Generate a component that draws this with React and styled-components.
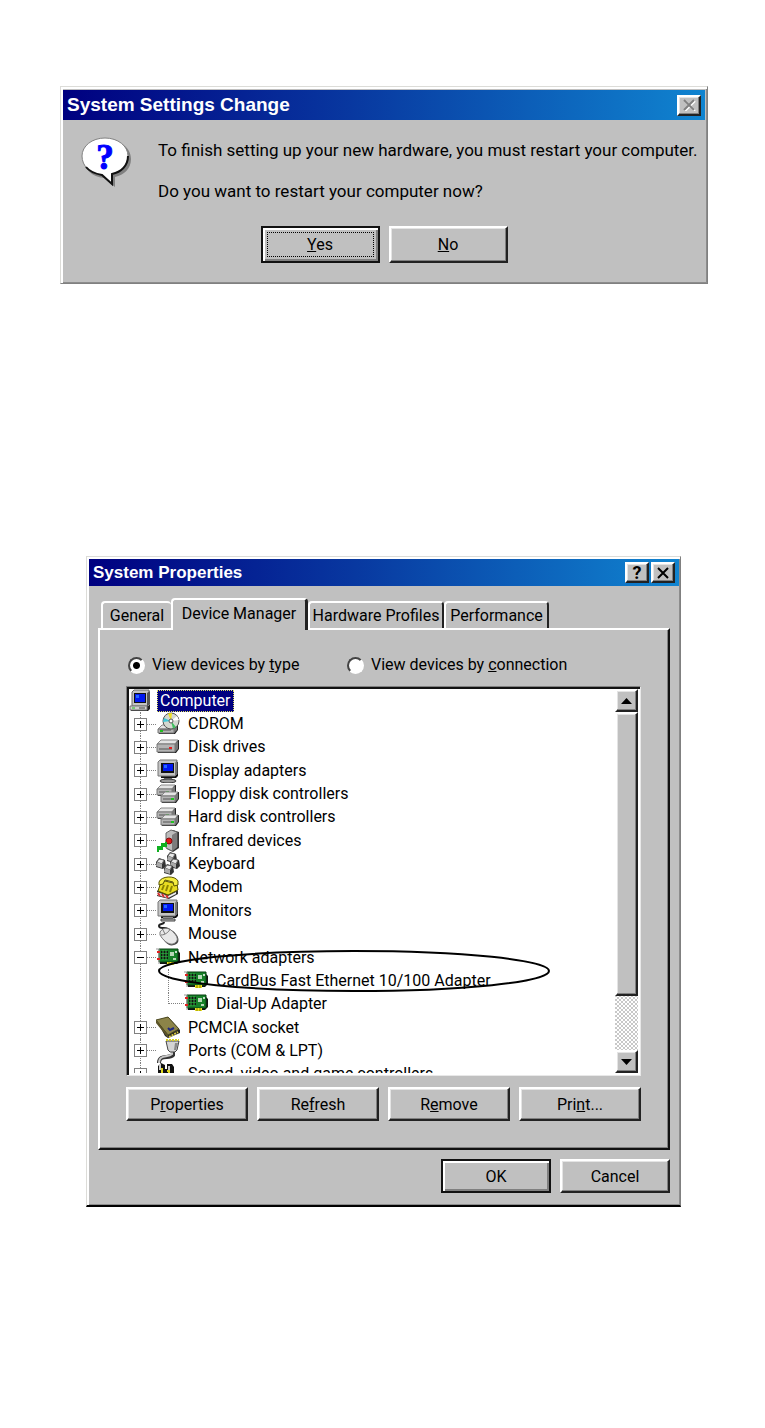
import React from "react";
import styled, { createGlobalStyle, css } from "styled-components";

const GlobalStyle = createGlobalStyle`
  * {
    box-sizing: border-box;
  }

  body {
    margin: 0;
    background: #fff;
    color: #000;
    font-family: Roboto, "Liberation Sans", Arial, sans-serif;
    font-size: 16px;
    line-height: 20px;
  }
`;

const Page = styled.main`
  display: flex;
  flex-direction: column;
  gap: 272px;
  padding: 86px 57px 220px 60px;
`;

const Window = styled.section`
  background: #c0c0c0;
  border: 1px solid;
  border-color: #dcdcd8 #808080 #808080 #dcdcd8;
  box-shadow: inset 2px 2px #fff, inset -1px -1px #8c8c8c;
  padding: 3px 2px 2px 2px;
`;

const PropertiesWindow = styled(Window)`
  margin: 0 27px 0 26px;
  padding: 2px 1px 0 2px;
  border-bottom: 2px solid #000;
`;

const TitleBar = styled.header`
  display: flex;
  align-items: center;
  gap: 2px;
  height: ${(props) => props.$height}px;
  padding: 0 4px;
  background: linear-gradient(to right, #000080, #0838a0 45%, #1084d0);
  color: #fff;
`;

const Title = styled.h2`
  flex: 1;
  margin: 0;
  font-family: "Liberation Sans", Arial, sans-serif;
  font-size: ${(props) => props.$size}px;
  font-weight: bold;
`;

const raised = css`
  background: #c0c0c0;
  border: 2px solid;
  border-color: #fff #222 #222 #fff;
  box-shadow: inset -1px -1px #808080, inset 1px 1px #e4e4e4;
  color: #000;
  font-family: inherit;
`;

const TitleButton = styled.button`
  ${raised}
  display: flex;
  align-items: center;
  justify-content: center;
  width: 24px;
  height: 21px;
  padding: 0;
  font-size: 18px;
  line-height: 16px;
  font-weight: bold;
`;

const Button = styled.button`
  ${raised}
  width: ${(props) => props.$width || "auto"};
  height: ${(props) => props.$height || 34}px;
  padding: 0;
  font-size: 16px;

  ${(props) =>
    props.$primary &&
    css`
      border-color: #111;
      box-shadow: inset 2px 2px #fff, inset -2px -2px #808080;
    `}
`;

const FocusRect = styled.span`
  display: block;
  margin: 4px;
  padding: 2px 0;
  border: 1px dotted #000;
`;

const MessageBody = styled.div`
  display: grid;
  grid-template-columns: 52px 1fr;
  column-gap: 26px;
  padding: 16px 0 0 17px;
`;

const Message = styled.div`
  padding-top: 4px;
  font-size: 17px;

  p {
    margin: 0 0 21px;
    white-space: nowrap;
  }
`;

const MessageButtons = styled.div`
  display: flex;
  justify-content: center;
  gap: 9px;
  padding: 4px 0 18px;
`;

const PropertiesBody = styled.div`
  padding: 12px 9px 12px 9px;
`;

const Tabs = styled.div`
  display: flex;
  align-items: flex-end;
  padding-left: 3px;
`;

const Tab = styled.button`
  height: 27px;
  width: ${(props) => props.$width}px;
  padding: 0;
  background: #c0c0c0;
  border: 2px solid;
  border-color: #fff #222 transparent #fff;
  border-bottom: 0;
  border-radius: 4px 4px 0 0;
  color: #000;
  font-family: inherit;
  font-size: 16px;
  white-space: nowrap;

  ${(props) =>
    props.$active &&
    css`
      height: 32px;
      margin-bottom: -2px;
      padding-bottom: 4px;
      border-right-width: 3px;
      z-index: 1;
    `}

  ${(props) =>
    props.$beforeActive &&
    css`
      border-right: 0;
    `}
`;

const Panel = styled.div`
  padding: 25px 27px 27px 26px;
  border: 2px solid;
  border-color: #fff #111 #111 #fff;
  box-shadow: inset -1px -1px #808080;
`;

const ViewOptions = styled.div`
  display: grid;
  grid-template-columns: 219px 1fr;
  padding: 0 0 11px 2px;
`;

const Option = styled.label`
  display: flex;
  align-items: center;
  gap: 7px;
`;

const Radio = styled.input`
  appearance: none;
  width: 17px;
  height: 17px;
  margin: 0;
  border: 2px solid;
  border-color: #444 #fff #fff #444;
  border-radius: 50%;
  background: #fff;

  &:checked {
    background: radial-gradient(circle, #000 3px, #fff 4px);
  }
`;

const ListBox = styled.div`
  position: relative;
  display: flex;
  height: 390px;
  padding: 2px;
  background: #fff;
  border: 1px solid;
  border-color: #808080 #e8e8e8 #e8e8e8 #808080;
  box-shadow: inset 2px 2px #111;
`;

const TreeViewport = styled.div`
  flex: 1;
  overflow: hidden;
`;

const Tree = styled.ul`
  display: grid;
  grid-template-rows: repeat(17, minmax(0, 1fr));
  height: 397px;
  margin: 0;
  padding: 0;
  list-style: none;
`;

const indents = [0, 5, 55];

const TreeRow = styled.li`
  position: relative;
  display: flex;
  align-items: center;
  padding-left: ${(props) => indents[props.$level]}px;
  white-space: nowrap;

  /* trunk line behind the expanders */
  &::before {
    content: "";
    position: absolute;
    top: 0;
    bottom: 0;
    left: 11px;
    border-left: 1px dotted #808080;
    display: ${(props) => (props.$level ? "block" : "none")};
  }
`;

const Expander = styled.button`
  position: relative;
  display: flex;
  width: 13px;
  height: 13px;
  padding: 0;
  background: #fff;
  border: 1px solid #808080;
`;

const Stub = styled.span`
  width: 9px;
  border-top: 1px dotted #808080;
`;

const Branch = styled.span`
  position: absolute;
  left: 39px;
  top: 0;
  width: 16px;
  height: ${(props) => (props.$last ? "50%" : "100%")};
  border-left: 1px dotted #808080;
  border-bottom: ${(props) => (props.$last ? "1px dotted #808080" : "0")};
`;

const TreeLabel = styled.span`
  margin-left: ${(props) => (props.$selected ? 4 : 5)}px;
  padding: 0 2px;
  border: 1px dotted transparent;

  ${(props) =>
    props.$selected &&
    css`
      background: #000080;
      border-color: #e0e060;
      color: #fff;
    `}
`;

const ScrollBar = styled.div`
  display: flex;
  flex-direction: column;
  width: 23px;
  background: repeating-conic-gradient(#c8c8c8 0 25%, #fff 0 50%) 0 0 / 4px 4px;
`;

const ScrollButton = styled.button`
  ${raised}
  display: flex;
  align-items: center;
  justify-content: center;
  height: 23px;
  padding: 0;
`;

const ScrollTrack = styled.div`
  flex: 1;
`;

const ScrollThumb = styled.div`
  ${raised}
  height: 84%;
`;

const Highlight = styled.svg`
  position: absolute;
  left: 31px;
  top: 262px;
`;

const ActionRow = styled.div`
  display: grid;
  grid-template-columns: repeat(4, 1fr);
  gap: 9px;
  padding-top: 11px;
`;

const DialogButtons = styled.div`
  display: flex;
  justify-content: flex-end;
  gap: 9px;
  padding-top: 9px;
`;

const Svg = ({ children }) => (
  <svg width="24" height="24" viewBox="0 0 24 24" aria-hidden="true">
    {children}
  </svg>
);

const Drive = ({ x, y, w, h }) => (
  <g transform={`translate(${x} ${y})`}>
    <path d={`M1 4L5 0H${w}V${h - 4}L${w - 3} ${h}H1Z`} fill="#222" />
    <path d={`M0 4L4 0H${w - 1}L${w - 4} 4Z`} fill="#e4e4e4" stroke="#888" strokeWidth="1" />
    <path d={`M0 4H${w - 4}V${h - 1}H0Z`} fill="#b4b4b4" stroke="#777" />
    <path d={`M${w - 4} 4L${w - 1} 1V${h - 4}L${w - 4} ${h - 1}Z`} fill="#777" />
    <path d={`M2 ${h - 4}H${w - 7}`} stroke="#555" />
  </g>
);

const Screen = () => (
  <>
    <path d="M4 3H22V17L20 19H5Z" fill="#111" />
    <path d="M2 3L4 1H21V15L19 17H2Z" fill="#c4c4c4" stroke="#777" />
    <path d="M19 4L21 1V15L19 17Z" fill="#777" />
    <path d="M5 4H18V14H5Z" fill="#111" />
    <path d="M7 5H17V12H7Z" fill="#0018f0" />
    <path d="M8 6H11V9H8Z" fill="#2868ff" />
  </>
);

const Board = () => (
  <>
    <path d="M3 5H22L24 7V15L21 18H4Z" fill="#111" />
    <path d="M3 3H22V16H3Z" fill="#168028" stroke="#064010" />
    <path d="M0 3H3V18" fill="none" stroke="#999" strokeWidth="1" />
    <path d="M1 6H4M1 13H4" stroke="#e02020" strokeWidth="2" />
    <path d="M5 6H12M5 9H12M5 12H12" stroke="#111" strokeWidth="2" />
    <path d="M7 4V14M10 4V14" stroke="#38b048" />
    <path d="M14 6H18V10H14ZM17 12H20V14H17Z" fill="#b8d8b8" />
    <circle cx="20" cy="6" r="1" fill="#fff" />
    <path d="M11 16H18V19H11Z" fill="#e8e020" />
    <path d="M13 16V19M16 16V19" stroke="#888000" />
  </>
);

const icons = {
  computer: (
    <>
      <path d="M3 3L5 1H20V15L18 17H3Z" fill="#c4c4c4" stroke="#666" />
      <path d="M18 4L21 2V15L18 17Z" fill="#555" />
      <path d="M5 4H17V14H5Z" fill="#111" />
      <path d="M6 5H16V13H6Z" fill="#0018f0" />
      <path d="M7 6H10V9H7Z" fill="#2868ff" />
      <path d="M2 17H19L21 15V20L19 22H2Z" fill="#222" />
      <path d="M1 17H18V21H1Z" fill="#d0d0d0" stroke="#777" />
      <path d="M3 19H6" stroke="#20c020" />
      <path d="M10 19H16" stroke="#444" />
    </>
  ),
  cdrom: (
    <>
      <Drive x={2} y={13} w={20} h={9} />
      <path d="M4 19H7" stroke="#20c020" strokeWidth="2" />
      <circle cx="15" cy="9" r="8" fill="#d4d8d0" stroke="#555" />
      <path d="M15 9L12 1.6L16 1Z" fill="#f0e020" />
      <path d="M15 9L21 4L23 8Z" fill="#fff" />
      <path d="M15 9L8 6L7 10Z" fill="#40c8d8" />
      <path d="M15 9L17 16.8L20 15Z" fill="#40c060" />
      <circle cx="15" cy="9" r="2" fill="#fff" stroke="#555" />
    </>
  ),
  disk: (
    <>
      <Drive x={1} y={5} w={22} h={13} />
      <path d="M13 13H16" stroke="#e02020" strokeWidth="2" />
    </>
  ),
  display: (
    <>
      <Screen />
      <path d="M8 19H16V21H8Z" fill="#777" />
      <ellipse cx="12" cy="22" rx="8" ry="2" fill="#999" stroke="#333" />
    </>
  ),
  controller: (
    <>
      <Drive x={1} y={3} w={19} h={11} />
      <path d="M10 10H13" stroke="#20c020" strokeWidth="1" />
      <Drive x={5} y={10} w={18} h={11} />
      <path d="M15 17H18" stroke="#20c020" strokeWidth="2" />
    </>
  ),
  infrared: (
    <>
      <path d="M12 4L17 1L23 3V19L17 23L11 20Z" fill="#333" />
      <path d="M10 4L15 1L21 3V18L16 22L10 19Z" fill="#bcbcbc" stroke="#666" />
      <path d="M16 6L21 3V18L16 22Z" fill="#7c7c7c" />
      <circle cx="13" cy="12" r="3" fill="#e01818" stroke="#801010" />
      <path d="M2 23V18H4V20H6V15H8V17H10V13" fill="none" stroke="#10b020" strokeWidth="2" />
    </>
  ),
  keyboard: (
    <>
      {[
        [11, 0, "a"],
        [0, 6, "b"],
        [14, 6, "c"],
        [8, 12, "d"],
      ].map(([x, y, key]) => (
        <g key={key} transform={`translate(${x} ${y})`}>
          <path d="M0 4L3 0L9 2L10 8L7 11L0 9Z" fill="#333" />
          <path d="M1 4L3 1L8 2L6 6Z" fill="#e8e8e8" stroke="#666" />
          <path d="M1 4L6 6L6 10L0 8Z" fill="#aaa" />
        </g>
      ))}
    </>
  ),
  modem: (
    <>
      <path d="M1 15L7 11L22 14V18L13 23L1 20Z" fill="#333" />
      <path d="M1 16L12 20L20 16V18L12 22L1 19Z" fill="#eee" />
      <path d="M2 17L4 20M6 18L8 21M10 19L12 22" stroke="#d83030" strokeWidth="2" />
      <path d="M4 9L9 5L21 8L22 14L12 19L2 15Z" fill="#e8dc20" stroke="#555000" />
      <path d="M3 6C5 0 19 -1 22 5V9L18 10L17 6L9 4L7 8L3 9Z" fill="#f4ec40" stroke="#555000" />
      <path d="M8 9L6 14M12 9L10 15M16 10L14 16" stroke="#8c8400" strokeWidth="2" />
    </>
  ),
  monitor: (
    <>
      <Screen />
      <path d="M7 18H17V20H7Z" fill="#888" />
      <path d="M5 20H19V22H5Z" fill="#bbb" stroke="#444" />
    </>
  ),
  mouse: (
    <>
      <path d="M14 9C12 4 3 8 3 4C3 1 8 3 8 0" fill="none" stroke="#222" strokeWidth="2" />
      <path d="M5 10C9 5 16 7 20 12C24 17 23 22 18 23C12 25 8 19 5 14Z" fill="#444" />
      <path d="M4 10C8 4 14 6 18 11C23 16 22 20 17 22C12 23 7 18 4 13Z" fill="#e8e8e8" stroke="#777" />
      <path d="M5 13C9 13 13 10 14 7M9 12L7 8" fill="none" stroke="#777" />
    </>
  ),
  network: <Board />,
  pcmcia: (
    <>
      <path d="M1 5L12 1L24 14V17L12 22L9 20Z" fill="#222" />
      <path d="M0 4L12 1L23 13L12 19Z" fill="#8c8448" stroke="#4c4820" />
      <path d="M0 4L12 19V22L0 7Z" fill="#5c5428" />
      <path d="M12 12L14 14L18 12" fill="none" stroke="#202880" strokeWidth="2" />
      <path d="M13 21L22 16" stroke="#d8c840" strokeDasharray="2 1" strokeWidth="2" />
    </>
  ),
  ports: (
    <>
      <path d="M17 12V16C13 20 3 15 3 24" fill="none" stroke="#333" strokeWidth="4" />
      <path d="M16 12V15C12 19 3 15 3 24" fill="none" stroke="#c8c8c8" strokeWidth="2" />
      <path d="M10 2H23L21 11L19 13H14L12 11Z" fill="#d4d4d4" stroke="#444" />
      <path d="M19 4H22L20 11H18Z" fill="#888" />
      <path d="M10 1H23" stroke="#d8d020" strokeWidth="2" strokeDasharray="2 1" />
    </>
  ),
  sound: (
    <>
      <path d="M2 4L5 1L9 3V7H11V2H16L18 5V14H2Z" fill="#111" />
      <path d="M4 2V8M13 4V9" stroke="#ccc" strokeWidth="2" />
      <path d="M6 6V12M11 9H13V12" stroke="#e0d820" strokeWidth="2" />
    </>
  ),
};

const devices = [
  { label: "Computer", icon: "computer", level: 0 },
  { label: "CDROM", icon: "cdrom", level: 1 },
  { label: "Disk drives", icon: "disk", level: 1 },
  { label: "Display adapters", icon: "display", level: 1 },
  { label: "Floppy disk controllers", icon: "controller", level: 1 },
  { label: "Hard disk controllers", icon: "controller", level: 1 },
  { label: "Infrared devices", icon: "infrared", level: 1 },
  { label: "Keyboard", icon: "keyboard", level: 1 },
  { label: "Modem", icon: "modem", level: 1 },
  { label: "Monitors", icon: "monitor", level: 1 },
  { label: "Mouse", icon: "mouse", level: 1 },
  { label: "Network adapters", icon: "network", level: 1, open: true },
  { label: "CardBus Fast Ethernet 10/100 Adapter", icon: "network", level: 2 },
  { label: "Dial-Up Adapter", icon: "network", level: 2, last: true },
  { label: "PCMCIA socket", icon: "pcmcia", level: 1 },
  { label: "Ports (COM & LPT)", icon: "ports", level: 1 },
  { label: "Sound, video and game controllers", icon: "sound", level: 1 },
];

const CloseIcon = ({ disabled }) => (
  <svg width="14" height="12" viewBox="0 0 14 12" aria-hidden="true">
    {disabled && <path d="M3 2L13 12M13 2L3 12" stroke="#fff" strokeWidth="2" />}
    <path d="M2 1L12 11M12 1L2 11" stroke={disabled ? "#808080" : "#000"} strokeWidth="2" />
  </svg>
);

const QuestionIcon = () => (
  <svg width="52" height="52" viewBox="0 0 52 52" aria-hidden="true">
    <path
      d="M27 4C41 4 51 12 51 23C51 33 44 39 35 41V51L24 42C12 41 4 33 4 23C4 12 14 4 27 4Z"
      fill="#808080"
    />
    <path
      d="M25 2C38 2 48 10 48 20C48 30 41 36 32 38V48L22 39C10 38 2 30 2 20C2 10 12 2 25 2Z"
      fill="#fff"
      stroke="#808080"
    />
    <path d="M48 20C48 30 41 36 32 38V48L22 39C16 38 10 36 6 31" fill="none" stroke="#111" strokeWidth="2" />
    <text
      x="25"
      y="33"
      textAnchor="middle"
      fontFamily="Liberation Serif, serif"
      fontSize="35"
      fontWeight="bold"
      fill="#00f"
      stroke="#00f"
    >
      ?
    </text>
  </svg>
);

function RestartDialog() {
  return (
    <Window>
      <TitleBar $height={30}>
        <Title $size={19}>System Settings Change</Title>
        <TitleButton disabled aria-label="Close">
          <CloseIcon disabled />
        </TitleButton>
      </TitleBar>
      <MessageBody>
        <QuestionIcon />
        <Message>
          <p>To finish setting up your new hardware, you must restart your computer.</p>
          <p>Do you want to restart your computer now?</p>
        </Message>
      </MessageBody>
      <MessageButtons>
        <Button $primary $width="119px" $height={37}>
          <FocusRect>
            <u>Y</u>es
          </FocusRect>
        </Button>
        <Button $width="119px" $height={37}>
          <u>N</u>o
        </Button>
      </MessageButtons>
    </Window>
  );
}

function DeviceTree() {
  return (
    <Tree>
      {devices.map((device) => (
        <TreeRow key={device.label} $level={device.level}>
          {device.level === 1 && (
            <>
              <Expander aria-label={`Toggle ${device.label}`}>
                <svg width="11" height="11" viewBox="0 0 11 11" aria-hidden="true">
                  <path d={device.open ? "M2 5H9V6H2Z" : "M2 5H9V6H2ZM5 2H6V9H5Z"} />
                </svg>
              </Expander>
              <Stub />
            </>
          )}
          {device.level === 2 && <Branch $last={device.last} />}
          <Svg>{icons[device.icon]}</Svg>
          <TreeLabel $selected={device.level === 0}>{device.label}</TreeLabel>
        </TreeRow>
      ))}
    </Tree>
  );
}

function PropertiesDialog() {
  return (
    <PropertiesWindow>
      <TitleBar $height={27}>
        <Title $size={17}>System Properties</Title>
        <TitleButton aria-label="Help">?</TitleButton>
        <TitleButton aria-label="Close">
          <CloseIcon />
        </TitleButton>
      </TitleBar>
      <PropertiesBody>
        <Tabs role="tablist">
          <Tab role="tab" $width={70} $beforeActive>
            General
          </Tab>
          <Tab role="tab" $width={137} $active aria-selected="true">
            Device Manager
          </Tab>
          <Tab role="tab" $width={136}>
            Hardware Profiles
          </Tab>
          <Tab role="tab" $width={105}>
            Performance
          </Tab>
        </Tabs>
        <Panel>
          <ViewOptions>
            <Option>
              <Radio type="radio" name="view" defaultChecked />
              <span>
                View devices by <u>t</u>ype
              </span>
            </Option>
            <Option>
              <Radio type="radio" name="view" />
              <span>
                View devices by <u>c</u>onnection
              </span>
            </Option>
          </ViewOptions>
          <ListBox>
            <TreeViewport>
              <DeviceTree />
            </TreeViewport>
            <ScrollBar>
              <ScrollButton aria-label="Scroll up">
                <svg width="11" height="6" viewBox="0 0 11 6">
                  <path d="M0 6L5.5 0L11 6Z" />
                </svg>
              </ScrollButton>
              <ScrollTrack>
                <ScrollThumb />
              </ScrollTrack>
              <ScrollButton aria-label="Scroll down">
                <svg width="11" height="6" viewBox="0 0 11 6">
                  <path d="M0 0L5.5 6L11 0Z" />
                </svg>
              </ScrollButton>
            </ScrollBar>
            <Highlight width="393" height="44" viewBox="0 0 393 44" aria-hidden="true">
              <ellipse cx="196" cy="22" rx="195" ry="20" fill="none" stroke="#000" strokeWidth="2" />
            </Highlight>
          </ListBox>
          <ActionRow>
            <Button>
              P<u>r</u>operties
            </Button>
            <Button>
              Re<u>f</u>resh
            </Button>
            <Button>
              R<u>e</u>move
            </Button>
            <Button>
              Pri<u>n</u>t...
            </Button>
          </ActionRow>
        </Panel>
        <DialogButtons>
          <Button $primary $width="110px">
            OK
          </Button>
          <Button $width="110px">Cancel</Button>
        </DialogButtons>
      </PropertiesBody>
    </PropertiesWindow>
  );
}

function App() {
  return (
    <>
      <GlobalStyle />
      <Page>
        <RestartDialog />
        <PropertiesDialog />
      </Page>
    </>
  );
}

export default App;
